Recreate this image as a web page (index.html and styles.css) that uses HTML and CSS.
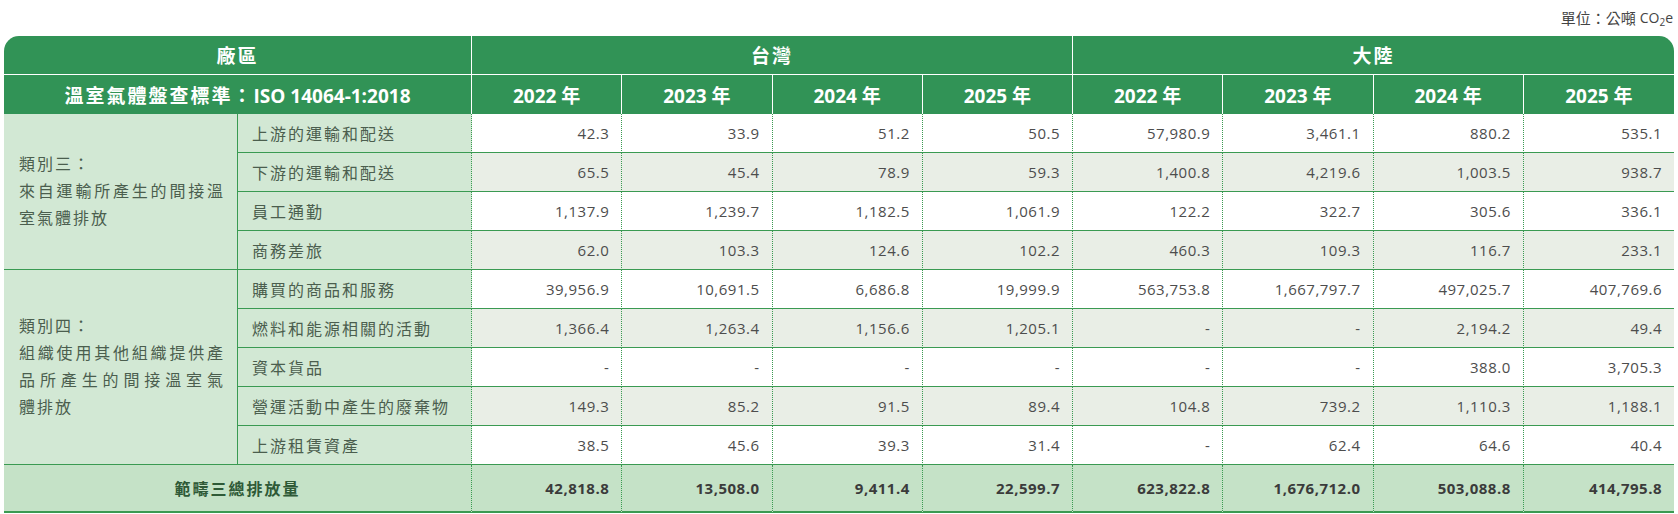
FILE: index.html
```html
<!DOCTYPE html>
<html lang="zh-Hant">
<head>
<meta charset="utf-8">
<title>範疇三排放量</title>
<link rel="stylesheet" href="styles.css">
</head>
<body>
<div class="unit">單位：公噸 <span class="co">CO<sub>2</sub>e</span></div>
<div class="wrap">
<table class="ghg">
  <colgroup>
    <col class="c-cat"><col class="c-sub">
    <col class="c-num"><col class="c-num"><col class="c-num"><col class="c-num">
    <col class="c-num"><col class="c-num"><col class="c-num"><col class="c-num">
  </colgroup>
  <thead>
    <tr class="h1">
      <th colspan="2" class="tl"><span class="zh">廠區</span></th>
      <th colspan="4"><span class="zh">台灣</span></th>
      <th colspan="4" class="tr last"><span class="zh">大陸</span></th>
    </tr>
    <tr class="h2">
      <th colspan="2"><span class="zh">溫室氣體盤查標準：</span>ISO 14064-1:2018</th>
      <th>2022 年</th><th>2023 年</th><th>2024 年</th><th>2025 年</th>
      <th>2022 年</th><th>2023 年</th><th>2024 年</th><th class="last">2025 年</th>
    </tr>
  </thead>
  <tbody>
    <tr>
      <td rowspan="4" class="cat">
        <span class="ln">類別三：</span>
        <span class="ln j">來自運輸所產生的間接溫</span>
        <span class="ln">室氣體排放</span>
      </td>
      <td class="sub">上游的運輸和配送</td>
      <td>42.3</td><td>33.9</td><td>51.2</td><td>50.5</td>
      <td>57,980.9</td><td>3,461.1</td><td>880.2</td><td class="last">535.1</td>
    </tr>
    <tr class="alt">
      <td class="sub">下游的運輸和配送</td>
      <td>65.5</td><td>45.4</td><td>78.9</td><td>59.3</td>
      <td>1,400.8</td><td>4,219.6</td><td>1,003.5</td><td class="last">938.7</td>
    </tr>
    <tr>
      <td class="sub">員工通勤</td>
      <td>1,137.9</td><td>1,239.7</td><td>1,182.5</td><td>1,061.9</td>
      <td>122.2</td><td>322.7</td><td>305.6</td><td class="last">336.1</td>
    </tr>
    <tr class="alt">
      <td class="sub">商務差旅</td>
      <td>62.0</td><td>103.3</td><td>124.6</td><td>102.2</td>
      <td>460.3</td><td>109.3</td><td>116.7</td><td class="last">233.1</td>
    </tr>
    <tr>
      <td rowspan="5" class="cat">
        <span class="ln">類別四：</span>
        <span class="ln j">組織使用其他組織提供產</span>
        <span class="ln j">品所產生的間接溫室氣</span>
        <span class="ln">體排放</span>
      </td>
      <td class="sub">購買的商品和服務</td>
      <td>39,956.9</td><td>10,691.5</td><td>6,686.8</td><td>19,999.9</td>
      <td>563,753.8</td><td>1,667,797.7</td><td>497,025.7</td><td class="last">407,769.6</td>
    </tr>
    <tr class="alt">
      <td class="sub">燃料和能源相關的活動</td>
      <td>1,366.4</td><td>1,263.4</td><td>1,156.6</td><td>1,205.1</td>
      <td>-</td><td>-</td><td>2,194.2</td><td class="last">49.4</td>
    </tr>
    <tr>
      <td class="sub">資本貨品</td>
      <td>-</td><td>-</td><td>-</td><td>-</td>
      <td>-</td><td>-</td><td>388.0</td><td class="last">3,705.3</td>
    </tr>
    <tr class="alt">
      <td class="sub">營運活動中產生的廢棄物</td>
      <td>149.3</td><td>85.2</td><td>91.5</td><td>89.4</td>
      <td>104.8</td><td>739.2</td><td>1,110.3</td><td class="last">1,188.1</td>
    </tr>
    <tr>
      <td class="sub">上游租賃資產</td>
      <td>38.5</td><td>45.6</td><td>39.3</td><td>31.4</td>
      <td>-</td><td>62.4</td><td>64.6</td><td class="last">40.4</td>
    </tr>
  </tbody>
  <tfoot>
    <tr class="total">
      <td colspan="2" class="tlabel">範疇三總排放量</td>
      <td>42,818.8</td><td>13,508.0</td><td>9,411.4</td><td>22,599.7</td>
      <td>623,822.8</td><td>1,676,712.0</td><td>503,088.8</td><td class="last">414,795.8</td>
    </tr>
  </tfoot>
</table>
</div>
</body>
</html>
```

FILE: styles.css
```css
html, body {
  margin: 0;
  padding: 0;
  background: #ffffff;
}

body {
  font-family: "Open Sans", "Noto Sans CJK TC", sans-serif;
  color: #4a4a4a;
}

.unit {
  height: 36px;
  display: flex;
  justify-content: flex-end;
  align-items: center;
  padding-right: 5px;
  font-family: "Open Sans", "Noto Sans CJK TC", sans-serif;
  font-size: 15px;
  color: #444444;
  line-height: 20px;
}

.unit .co {
  font-size: 14px;
  margin-left: 4px;
}

.unit sub {
  font-size: 10px;
  vertical-align: -3px;
  line-height: 0;
}

.wrap {
  padding: 0 4px;
}

.ghg {
  width: 100%;
  table-layout: fixed;
  border-collapse: separate;
  border-spacing: 0;
}

.c-cat { width: 234px; }
.c-sub { width: 234px; }
.c-num { width: 150.25px; }

/* header */
.ghg th {
  background: #319356;
  color: #ffffff;
  font-weight: 700;
  font-size: 19px;
  padding: 0;
  text-align: center;
  vertical-align: middle;
  border-right: 1px solid #ffffff;
  white-space: nowrap;
}

.ghg th.last {
  border-right: 0;
}

.ghg th .zh {
  letter-spacing: 2px;
}

.h1 { height: 39px; }
.h2 { height: 39px; }

.h1 th {
  border-bottom: 1px solid #ffffff;
}

.ghg th.tl { border-top-left-radius: 15px; }
.ghg th.tr { border-top-right-radius: 15px; }

/* body */
.ghg tbody tr { height: 39px; }

.ghg td {
  padding: 0 12px 0 0;
  font-size: 15px;
  letter-spacing: 0.5px;
  text-align: right;
  vertical-align: middle;
  color: #4d4d4d;
  background: #ffffff;
  border-bottom: 1px solid #3a9a52;
  border-right: 1px dotted #3a9a52;
  white-space: nowrap;
}

.ghg td.last {
  border-right: 0;
}

.ghg tr.alt td {
  background: #e9eee6;
}

.ghg td.cat,
.ghg tr.alt td.cat {
  background: #d2e8d4;
  border-right: 1px solid #3a9a52;
  padding: 0 12px 0 15px;
  text-align: left;
  font-size: 16px;
  letter-spacing: 2px;
  line-height: 27px;
  color: #4b5e4e;
  white-space: normal;
}

.cat .ln {
  display: block;
}

.cat .ln.j {
  text-align: justify;
  text-align-last: justify;
}

.ghg td.sub,
.ghg tr.alt td.sub {
  background: #d2e8d4;
  padding: 0 0 0 14px;
  text-align: left;
  font-size: 16px;
  letter-spacing: 2px;
  color: #4b5e4e;
}

/* total */
.ghg tr.total {
  height: 48px;
}

.ghg tr.total td {
  background: #c5e2c7;
  border-bottom: 2px solid #3a9a52;
  font-weight: 700;
  color: #3b3b3b;
}

.ghg tr.total td.tlabel {
  text-align: center;
  padding: 0;
  font-size: 16px;
  letter-spacing: 2px;
  color: #2f5a37;
}
```
